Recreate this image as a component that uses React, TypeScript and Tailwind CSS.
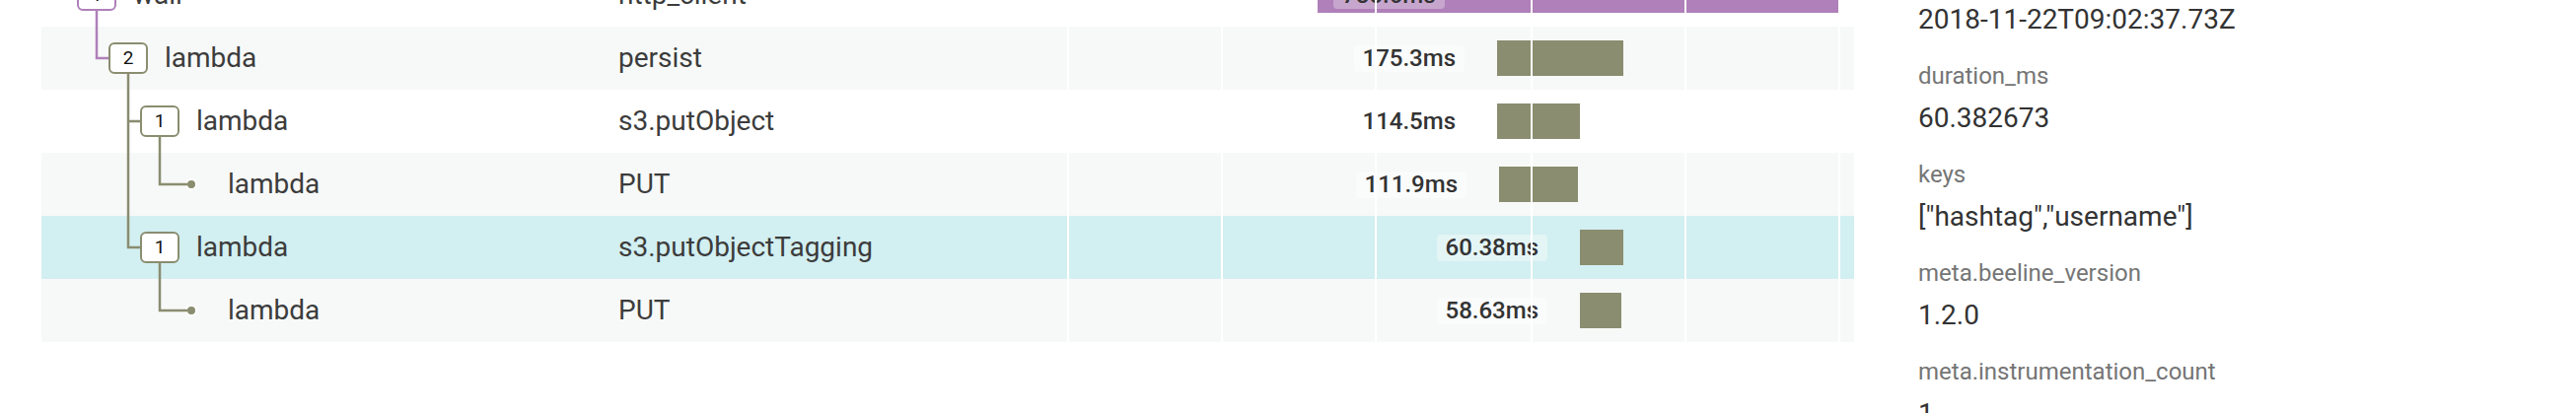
import React from 'react';

type Span = {
  name: string;
  service: string;
  level: number;
  count?: number;
  duration: string;
  left: number;
  width: number;
  root?: boolean;
};

const spans: Span[] = [
  { name: 'wall', service: 'http_client', level: 0, count: 1, duration: '785.6ms', left: 254, width: 528, root: true },
  { name: 'lambda', service: 'persist', level: 1, count: 2, duration: '175.3ms', left: 436, width: 128 },
  { name: 'lambda', service: 's3.putObject', level: 2, count: 1, duration: '114.5ms', left: 436, width: 84 },
  { name: 'lambda', service: 'PUT', level: 3, duration: '111.9ms', left: 438, width: 80 },
  { name: 'lambda', service: 's3.putObjectTagging', level: 2, count: 1, duration: '60.38ms', left: 520, width: 44 },
  { name: 'lambda', service: 'PUT', level: 3, duration: '58.63ms', left: 520, width: 42 },
];

const selected = 4;
const gridLines = [0, 156, 312, 470, 626, 782];

const fields = [
  { label: 'timestamp', value: '2018-11-22T09:02:37.73Z' },
  { label: 'duration_ms', value: '60.382673' },
  { label: 'keys', value: '["hashtag","username"]' },
  { label: 'meta.beeline_version', value: '1.2.0' },
  { label: 'meta.instrumentation_count', value: '1' },
];

const OLIVE = '#8a8d6f';
const PURPLE = '#af80b9';

function TreeLines() {
  // tree connectors, in table coordinates (row height 64)
  return (
    <svg className="absolute left-0 top-0 pointer-events-none" width="585" height="384">
      <path d="M56 48 V96 H68" fill="none" stroke={PURPLE} strokeWidth="2.5" />
      <path d="M88 112 V288 H100 M88 160 H100" fill="none" stroke={OLIVE} strokeWidth="2.5" />
      <path d="M120 176 V224 H148" fill="none" stroke={OLIVE} strokeWidth="2.5" />
      <path d="M120 304 V352 H148" fill="none" stroke={OLIVE} strokeWidth="2.5" />
    </svg>
  );
}

function Row({ span, index }: { span: Span; index: number }) {
  const bg =
    index === selected ? 'bg-[#d2eff1]' : index % 2 === 1 ? 'bg-[#f7f9f8]' : 'bg-white';

  return (
    <div className={`flex h-[64px] ${bg}`}>
      <div className="w-[585px] flex items-center" style={{ paddingLeft: 36 + span.level * 32 }}>
        {span.count ? (
          <div
            className={`w-[40px] h-[32px] rounded-[6px] border-2 bg-white flex items-center justify-center text-[19px] text-[#111] ${
              span.root ? 'border-[#af80b9]' : 'border-[#8a8d6f]'
            }`}
          >
            {span.count}
          </div>
        ) : (
          <div className="w-[40px] h-[32px] flex items-center justify-center">
            <div className="w-[8px] h-[8px] rounded-full bg-[#8a8d6f] border-2 border-white box-content" />
          </div>
        )}
        <span className="ml-[17px] text-[28px] text-[#3c3c3c]">{span.name}</span>
      </div>
      <div className="w-[455px] flex items-center text-[28px] text-[#3c3c3c]">{span.service}</div>
      <div className="relative flex-1">
        {span.root ? (
          <div
            className="absolute top-[14px] h-[36px] bg-[#af80b9] flex items-center pl-[16px]"
            style={{ left: span.left, width: span.width }}
          >
            <span className="h-[27px] px-[9px] rounded-[4px] bg-white/30 flex items-center text-[24px] font-medium text-[#333]">
              {span.duration}
            </span>
          </div>
        ) : (
          <>
            <div
              className="absolute top-0 left-0 h-full flex items-center justify-end pr-[33px]"
              style={{ width: span.left }}
            >
              <span className="h-[27px] px-[9px] rounded-[4px] bg-white/40 flex items-center text-[24px] font-medium text-[#333]">
                {span.duration}
              </span>
            </div>
            <div
              className="absolute top-[14px] h-[36px] bg-[#8a8d6f]"
              style={{ left: span.left, width: span.width }}
            />
          </>
        )}
        {gridLines.map((x) => (
          <div key={x} className="absolute top-0 bottom-0 w-[2px] bg-white" style={{ left: x }} />
        ))}
      </div>
    </div>
  );
}

export default function App() {
  return (
    <div className="flex w-[2612px] h-[419px] overflow-hidden bg-white font-['Roboto',sans-serif]">
      <div className="w-[1880px] shrink-0 pl-[42px]">
        <div className="relative -mt-[37px]">
          {spans.map((span, i) => (
            <Row key={i} span={span} index={i} />
          ))}
          <TreeLines />
        </div>
      </div>
      <div className="flex-1 pl-[65px]">
        <div className="-mt-[39px]">
          {fields.map((f) => (
            <div key={f.label} className="pb-[23px]">
              <div className="text-[24px] leading-[32px] text-[#757575]">{f.label}</div>
              <div className="mt-[9px] text-[28px] leading-[36px] text-[#333]">{f.value}</div>
            </div>
          ))}
        </div>
      </div>
    </div>
  );
}
